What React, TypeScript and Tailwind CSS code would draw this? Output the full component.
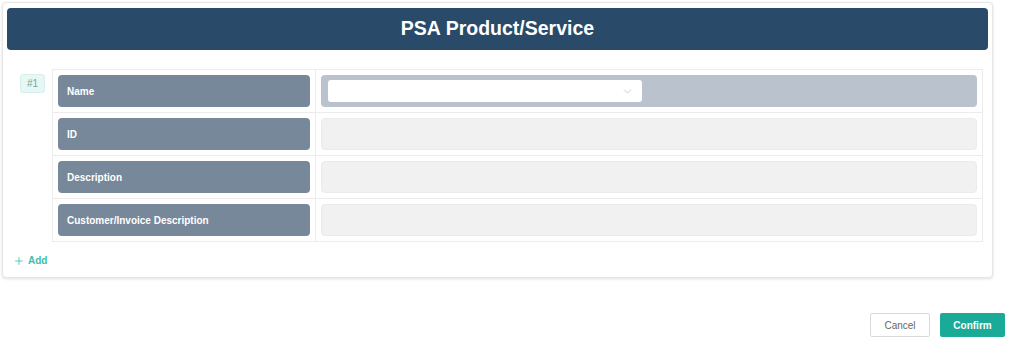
import React from 'react';
import { ChevronDown, Plus } from 'lucide-react';

const rows = ['Name', 'ID', 'Description', 'Customer/Invoice Description'];

export default function App() {
  return (
    <div className="w-[1017px] h-[352px] bg-white font-['Liberation_Sans',Arial,sans-serif]">
      <div className="pt-[2px] pl-[2px] w-[993px]">
        <div className="rounded border border-[#e6e6e6] bg-white shadow-[0_1px_3px_rgba(0,0,0,0.12)] px-[4px] pt-[5px] pb-[9px]">
          <div className="h-[42px] rounded-[4px] bg-[#294a68] flex items-center justify-center">
            <h1 className="text-white font-bold text-[19.5px] leading-none">PSA Product/Service</h1>
          </div>
          <div className="flex mt-[19px]">
            <div className="w-[45px] pl-[13px] pt-[1px]">
              <span className="inline-flex items-center justify-center w-[25px] h-[19px] rounded-[3px] border border-[#d5efeb] bg-[#e8f6f4] text-[10px] text-[#6fa89f]">
                #1
              </span>
            </div>
            <table className="w-[931px] border-collapse border border-[#ececec]">
              <tbody>
                {rows.map((label, i) => (
                  <tr key={label} className="border-b border-[#ececec]">
                    <td className="w-[263px] p-[5px] border-r border-[#ececec]">
                      <div className="h-[32px] rounded-[4px] bg-[#77889a] flex items-center pl-[9px]">
                        <span className="text-white font-bold text-[10px]">{label}</span>
                      </div>
                    </td>
                    <td className="p-[5px]">
                      {i === 0 ? (
                        <div className="h-[32px] rounded-[4px] bg-[#bac3cd] flex items-center pl-[7px]">
                          <div className="w-[314px] h-[22px] rounded-[3px] bg-white flex items-center justify-end pr-[8px]">
                            <ChevronDown size={13} strokeWidth={1.2} className="text-[#b0b6bd]" />
                          </div>
                        </div>
                      ) : (
                        <div className="h-[32px] rounded-[4px] bg-[#f1f1f1] border border-[#ebebeb]" />
                      )}
                    </td>
                  </tr>
                ))}
              </tbody>
            </table>
          </div>
          <button className="mt-[11px] ml-[6px] flex items-center gap-[3px] text-[#3dbdab] text-[10px] font-bold">
            <Plus size={12} strokeWidth={1.6} />
            Add
          </button>
        </div>
      </div>
      <div className="flex justify-end gap-[10px] pr-[12px] mt-[35px]">
        <button className="w-[60px] h-[24px] rounded-[2px] border border-[#d9d9d9] bg-white text-[10px] text-[#666]">
          Cancel
        </button>
        <button className="w-[65px] h-[24px] rounded-[2px] bg-[#1aab98] text-[10px] font-bold text-white">
          Confirm
        </button>
      </div>
    </div>
  );
}
